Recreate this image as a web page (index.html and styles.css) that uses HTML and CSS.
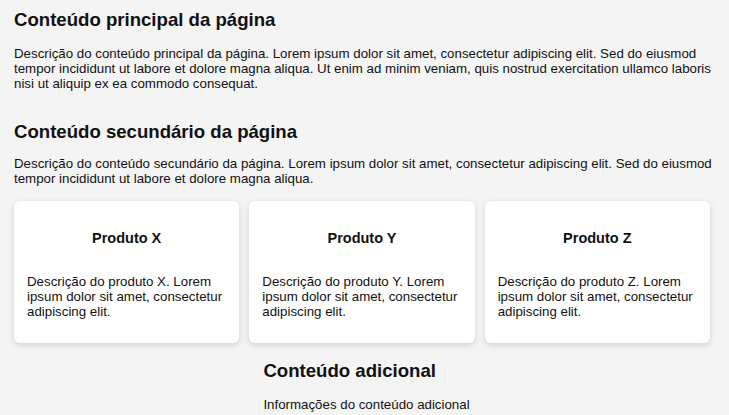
FILE: index.html
```html
<!DOCTYPE html>
<html lang="pt">
<head>
<meta charset="utf-8">
<title>Página</title>
<link rel="stylesheet" href="styles.css">
</head>
<body>
<div class="page">
  <section class="section section-main">
    <h2 class="section-title">Conteúdo principal da página</h2>
    <p class="section-text text-main">Descrição do conteúdo principal da página. Lorem ipsum dolor sit amet, consectetur adipiscing elit. Sed do eiusmod tempor incididunt ut labore et dolore magna aliqua. Ut enim ad minim veniam, quis nostrud exercitation ullamco laboris nisi ut aliquip ex ea commodo consequat.</p>
  </section>
  <section class="section section-secondary">
    <h2 class="section-title">Conteúdo secundário da página</h2>
    <p class="section-text text-secondary">Descrição do conteúdo secundário da página. Lorem ipsum dolor sit amet, consectetur adipiscing elit. Sed do eiusmod tempor incididunt ut labore et dolore magna aliqua.</p>
    <div class="cards">
      <div class="card">
        <h3 class="card-title">Produto X</h3>
        <p class="card-text">Descrição do produto X. Lorem ipsum dolor sit amet, consectetur adipiscing elit.</p>
      </div>
      <div class="card">
        <h3 class="card-title">Produto Y</h3>
        <p class="card-text">Descrição do produto Y. Lorem ipsum dolor sit amet, consectetur adipiscing elit.</p>
      </div>
      <div class="card">
        <h3 class="card-title">Produto Z</h3>
        <p class="card-text">Descrição do produto Z. Lorem ipsum dolor sit amet, consectetur adipiscing elit.</p>
      </div>
    </div>
  </section>
  <aside class="extra">
    <h2 class="section-title">Conteúdo adicional</h2>
    <p class="section-text extra-text">Informações do conteúdo adicional</p>
  </aside>
</div>
</body>
</html>
```
FILE: styles.css
```css
html, body {
  margin: 0;
  padding: 0;
  background: #f4f4f4;
}

body {
  font-family: "Liberation Sans", Arial, sans-serif;
  font-size: 13.3px;
  line-height: 15px;
  color: #111;
  overflow: hidden;
}

.page {
  padding: 9px 10px 0 14px;
}

.section-title {
  margin: 0;
  font-size: 18.6px;
  line-height: 22px;
  font-weight: bold;
  color: #111;
}

.section-text {
  margin: 0;
}

.text-main {
  margin-top: 15px;
}

.section-secondary {
  margin-top: 30px;
}

.text-secondary {
  margin-top: 13px;
}

.cards {
  margin: 15px 9px 0 0;
  display: grid;
  grid-template-columns: repeat(3, 1fr);
  gap: 10px;
}

.card {
  background: #fff;
  border-radius: 6px;
  box-shadow: 0 2px 6px rgba(0, 0, 0, 0.15);
  padding: 29px 13px 24px;
  height: 142px;
  box-sizing: border-box;
}

.card-title {
  margin: 0;
  text-align: center;
  font-size: 14.5px;
  line-height: 17px;
  font-weight: bold;
}

.card-text {
  margin: 27px 0 0;
}

.extra {
  width: fit-content;
  margin: 17px auto 0;
}

.extra-text {
  margin-top: 15px;
}
```
